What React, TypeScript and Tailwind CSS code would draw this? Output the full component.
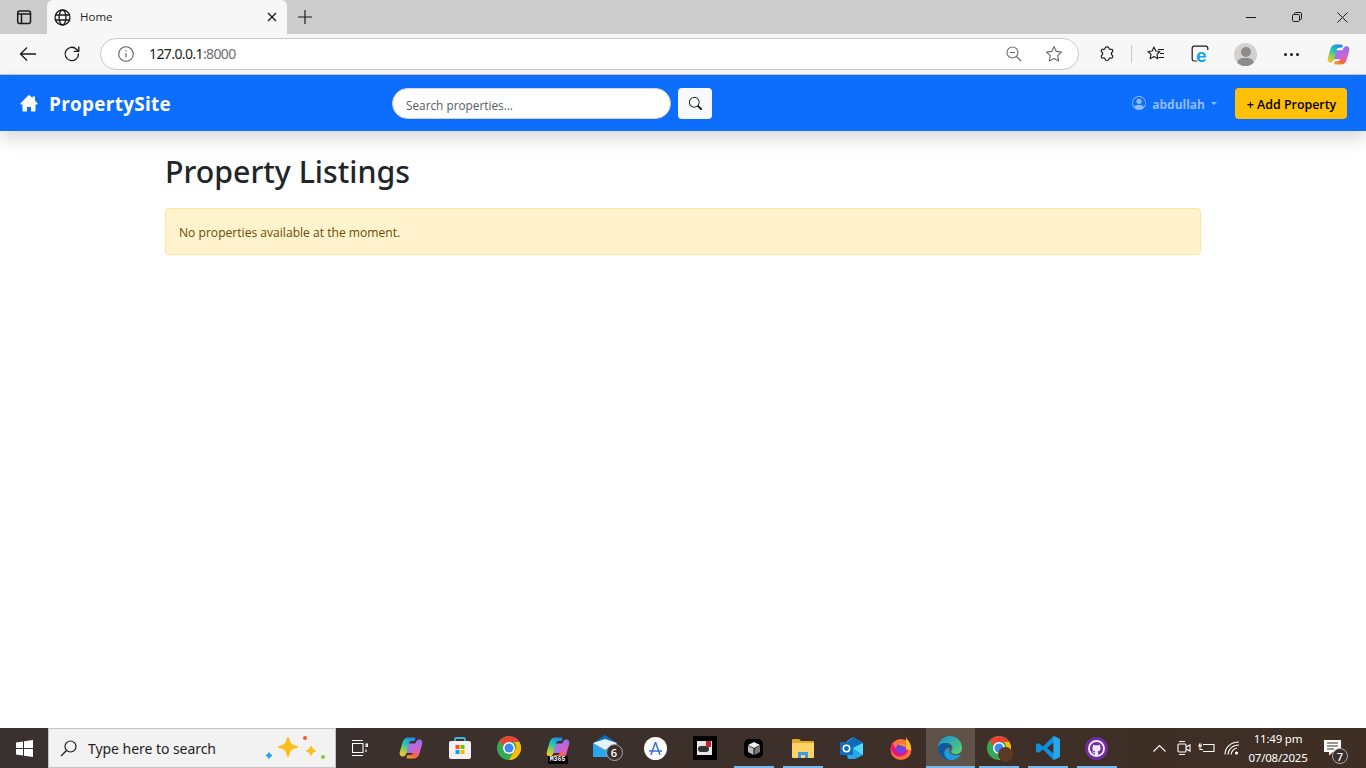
import React from "react";

const FONT = "font-['Open_Sans','Noto_Sans',sans-serif]";

function Stroke({ size = 20, className = "", children, vb = 20 }: { size?: number; className?: string; children: React.ReactNode; vb?: number }) {
  return (
    <svg width={size} height={size} viewBox={`0 0 ${vb} ${vb}`} fill="none" stroke="currentColor" strokeWidth={1.3} strokeLinecap="round" strokeLinejoin="round" className={className}>
      {children}
    </svg>
  );
}

function TabStrip() {
  return (
    <div className="flex h-[34px] bg-[#cccccc] items-stretch">
      <div className="w-[47px] flex items-center justify-center text-[#1b1b1b]">
        <Stroke size={16} vb={16}>
          <rect x="1.7" y="2" width="12.8" height="12.4" rx="2" strokeWidth="1.5" />
          <path d="M1.7 5h12.8M5.5 5v9.4" strokeWidth="1.5" />
        </Stroke>
      </div>
      <div className="w-[240px] bg-[#f7f7f7] rounded-t-[6px] flex items-center pl-[7px] pr-[10px] text-[#1b1b1b]">
        <Stroke size={17} vb={17}>
          <circle cx="8.5" cy="8.5" r="7.5" />
          <ellipse cx="8.5" cy="8.5" rx="3.4" ry="7.5" />
          <path d="M1.5 6h14M1.5 11h14" />
        </Stroke>
        <span className={`${FONT} text-[11.5px] ml-[9px] text-[#1f1f1f]`}>Home</span>
        <svg width="10" height="10" viewBox="0 0 10 10" className="ml-auto" stroke="#1b1b1b" strokeWidth="1.3"><path d="M1 1l8 8M9 1l-8 8" /></svg>
      </div>
      <div className="w-[36px] flex items-center justify-center">
        <svg width="14" height="14" viewBox="0 0 14 14" stroke="#1b1b1b" strokeWidth="1.2"><path d="M7 0v14M0 7h14" /></svg>
      </div>
      <div className="ml-auto flex items-center text-[#1b1b1b]">
        <div className="w-[46px] flex justify-center">
          <svg width="10" height="10" viewBox="0 0 10 10" stroke="currentColor"><path d="M0 5.5h10" /></svg>
        </div>
        <div className="w-[46px] flex justify-center">
          <svg width="10" height="10" viewBox="0 0 10 10" fill="none" stroke="currentColor"><rect x="0.5" y="2.5" width="7" height="7" rx="1.2" /><path d="M2.5 2.2V1.7a1.2 1.2 0 0 1 1.2-1.2h4.6a1.2 1.2 0 0 1 1.2 1.2v4.6a1.2 1.2 0 0 1-1.2 1.2H8" /></svg>
        </div>
        <div className="w-[46px] flex justify-center pr-[2px]">
          <svg width="11" height="11" viewBox="0 0 11 11" stroke="currentColor"><path d="M.5.5l10 10M10.5.5l-10 10" /></svg>
        </div>
      </div>
    </div>
  );
}

function Copilot({ size = 24, id = "a" }: { size?: number; id?: string }) {
  return (
    <svg width={size} height={size} viewBox="0 0 24 24">
      <defs>
        <linearGradient id={`cp1${id}`} x1="0.7" y1="0" x2="0.2" y2="1"><stop offset="0" stopColor="#1f8fe8" /><stop offset="0.4" stopColor="#20c4b8" /><stop offset="0.75" stopColor="#a8d13c" /><stop offset="1" stopColor="#f5c52e" /></linearGradient>
        <linearGradient id={`cp2${id}`} x1="0.7" y1="0" x2="0.3" y2="1"><stop offset="0" stopColor="#9a6ef0" /><stop offset="0.55" stopColor="#e25fc0" /><stop offset="0.8" stopColor="#f4633f" /><stop offset="1" stopColor="#f2912c" /></linearGradient>
      </defs>
      <path d="M9 7.500h9l-3 9.500H6z" fill="#b06ee0" />
      <path d="M9.500 1.500h5.500c1.800 0 1.800 2.500.5 3.300-.6.300-1.600.2-2.500.2-1.800 0-2.800 1-3.300 3L7.900 15.500c-.6 3-1.900 5-4.400 5C1.200 20.500.2 18 .9 15.500L3.600 6.200C4.500 3.200 6.500 1.500 9.500 1.500z" fill={`url(#cp1${id})`} />
      <path d="M14.500 22.500H9c-1.800 0-1.800-2.500-.5-3.300.6-.3 1.600-.2 2.500-.2 1.800 0 2.800-1 3.300-3l1.800-7.500c.6-3 1.900-5 4.400-5 2.300 0 3.300 2.500 2.600 5l-2.700 9.300c-.9 3-2.900 4.700-5.900 4.700z" fill={`url(#cp2${id})`} />
    </svg>
  );
}

function ToolBar() {
  return (
    <div className="h-[41px] bg-[#f7f7f7] border-b border-[#c9c9c9] flex items-center text-[#1b1b1b] relative">
      <div className="w-[100px] flex items-center">
        <div className="w-[56px] flex justify-center">
          <svg width="18" height="16" viewBox="0 0 18 16" fill="none" stroke="#1b1b1b" strokeWidth="1.3"><path d="M17 8H1.500M8 1.500L1.500 8 8 14.500" /></svg>
        </div>
        <div className="w-[32px] flex justify-center">
          <Stroke size={18} vb={18}>
            <path d="M15.500 9a6.700 6.700 0 1 1-2-4.800L15.500 6" />
            <path d="M15.800 1.800v4.500h-4.500" />
          </Stroke>
        </div>
      </div>
      <div className="w-[979px] h-[32px] bg-white border border-[#c9c9c9] rounded-full flex items-center pl-[17px] pr-[15px]">
        <svg width="16" height="16" viewBox="0 0 16 16" fill="none" stroke="#5f5f5f" strokeWidth="1.1"><circle cx="8" cy="8" r="7.300" /><path d="M8 7v4.500M8 4.200v1.300" /></svg>
        <span className="ml-[15px] -mt-[1px] text-[14px] text-[#1b1b1b] font-['Noto_Sans','Open_Sans',sans-serif] tracking-[-0.6px]">127.0.0.1<span className="text-[#6e6e6e]">:8000</span></span>
        <div className="ml-auto flex items-center gap-[23px] text-[#6b6b6b]">
          <svg width="16" height="16" viewBox="0 0 16 16" fill="none" stroke="currentColor" strokeWidth="1.1"><circle cx="6.500" cy="6.500" r="5.500" /><path d="M10.500 10.500L15 15M4 6.500h5" /></svg>
          <svg width="18" height="18" viewBox="0 0 18 18" fill="none" stroke="currentColor" strokeWidth="1.1" strokeLinejoin="round"><path d="M9 1.500l2.300 4.900 5.200.7-3.800 3.600 1 5.300L9 13.400 4.300 16l1-5.300L1.500 7.100l5.200-.7z" /></svg>
        </div>
      </div>
      <div className="flex-1 flex items-center pl-[20px] relative h-full">
        <svg width="16" height="16" viewBox="0 0 16 16" fill="none" stroke="#1b1b1b" strokeWidth="1.200" strokeLinejoin="round"><path d="M6 2.400c0-2 4-2 4 0 .2 1 1 1.100 2 .9 1.700-.3 2.400 1.900 1 3-.9.700-.9 2 0 2.700 1.400 1.100.7 3.400-1 3-1-.2-1.800 0-2 1-.4 2-3.600 2-4 0-.2-1-1-1.200-2-1-1.700.4-2.500-1.900-1-3 .9-.7.900-2 0-2.700-1.500-1.100-.7-3.300 1-3 1 .2 1.800.1 2-.9z" /></svg>
        <div className="w-px h-[18px] bg-[#c9c9c9] ml-[16px]" />
        <div className="ml-[15px]">
          <svg width="18" height="16" viewBox="0 0 18 16" fill="none" stroke="#1b1b1b" strokeWidth="1.100" strokeLinejoin="round"><path d="M7 1l1.800 4 4.200.5-3 2.900.8 4.300L7 10.600 3.200 12.700 4 8.400 1 5.500 5.200 5z" /><path d="M11 3.500h6M13 7.500h4M11.500 11.500h5.500" /></svg>
        </div>
        <div className="ml-[26px] relative w-[18px] h-[18px]">
          <svg width="18" height="18" viewBox="0 0 18 18" fill="none" stroke="#1b1b1b" strokeWidth="1.200"><path d="M6 16H3a1.800 1.800 0 0 1-1.800-1.800V3A1.800 1.800 0 0 1 3 1.200h12A1.800 1.800 0 0 1 16.800 3v2" /></svg>
          <span className="absolute left-[5px] top-[3px] text-[#1aa3e8] font-bold text-[19px] leading-[16px] font-['Liberation_Sans',sans-serif]">e</span>
        </div>
        <div className="ml-[25px] w-[23px] h-[23px] rounded-full bg-[#d3d1cf] overflow-hidden relative flex justify-center">
          <div className="absolute top-[4px] w-[10px] h-[10px] rounded-full bg-[#8e8c8a]" />
          <div className="absolute top-[15px] w-[17px] h-[12px] rounded-full bg-[#8e8c8a]" />
        </div>
        <div className="ml-[27px] flex gap-[3px]">
          <div className="w-[3px] h-[3px] rounded-full bg-[#1b1b1b]" />
          <div className="w-[3px] h-[3px] rounded-full bg-[#1b1b1b]" />
          <div className="w-[3px] h-[3px] rounded-full bg-[#1b1b1b]" />
        </div>
        <div className="ml-[28px]"><Copilot size={23} id="t" /></div>
      </div>
    </div>
  );
}

function Navbar() {
  return (
    <nav className={`h-[56px] bg-[#0d6efd] shadow-[0_8px_16px_rgba(0,0,0,0.15)] flex items-center relative ${FONT}`}>
      <div className="w-[392px] flex items-center pl-[20px] text-white">
        <svg width="18" height="17" viewBox="0 0 18 17" fill="white" className="mt-[2px]"><path d="M9 .3c.3 0 .6.1.8.3l2.700 2.500V1.500h2.500v3.900l2.400 2.800c.5.500.1 1.300-.6 1.300H15.500v6c0 .600-.4 1-1 1H11v-4.500H7V16.500H3.500c-.6 0-1-.4-1-1v-6H1.200c-.7 0-1.100-.8-.6-1.300L8.200.6C8.400.4 8.700.3 9 .3z" /></svg>
        <span className="ml-[11px] mt-[2px] text-[18.900px] font-bold tracking-[0.3px]">PropertySite</span>
      </div>
      <input readOnly placeholder="Search properties..." className="w-[279px] h-[31px] bg-white rounded-full border border-[#ced4da] pl-[13px] pt-[3px] text-[11.800px] placeholder:text-[#595c5f] outline-none" />
      <div className="ml-[7px] w-[34px] h-[31px] rounded-[4px] bg-[#f8f9fa] flex items-center justify-center">
        <svg width="13" height="13" viewBox="0 0 16 16" fill="#000"><path d="M11.742 10.344a6.500 6.500 0 1 0-1.397 1.398h-.001q.044.060.098.115l3.850 3.850a1 1 0 0 0 1.415-1.414l-3.850-3.850a1 1 0 0 0-.115-.100zM12 6.500a5.500 5.500 0 1 1-11 0 5.500 5.500 0 0 1 11 0" /></svg>
      </div>
      <div className="ml-auto flex items-center pr-[19px]">
        <svg width="14" height="14" viewBox="0 0 16 16" fill="#8fbcfe"><path d="M11 6a3 3 0 1 1-6 0 3 3 0 0 1 6 0" /><path fillRule="evenodd" d="M0 8a8 8 0 1 1 16 0A8 8 0 0 1 0 8m8-7a7 7 0 0 0-5.468 11.370C3.242 11.226 4.805 10 8 10s4.757 1.225 5.468 2.370A7 7 0 0 0 8 1" /></svg>
        <span className="ml-[6px] mt-[4px] text-[12px] font-bold text-[#8fbcfe]">abdullah</span>
        <div className="ml-[6px] w-0 h-0 border-x-[3.500px] border-x-transparent border-t-[3.500px] border-t-[#8fbcfe]" />
        <div className="ml-[18px] w-[112px] h-[31px] pt-[4px] pl-[1px] rounded-[4px] bg-[#ffc107] flex items-center justify-center text-[12.400px] font-semibold text-black">+ Add Property</div>
      </div>
    </nav>
  );
}

function Main() {
  return (
    <main className={`flex-1 bg-white ${FONT}`}>
      <div className="w-[1036px] mx-auto pt-[21px]">
        <h1 className="text-[30.300px] leading-[40px] font-medium text-[#212529] font-['Noto_Sans','Open_Sans',sans-serif]">Property Listings</h1>
        <div className="mt-[16px] h-[47px] rounded-[4px] bg-[#fff3cd] border border-[#ffe69c] flex items-center pl-[13px] pt-[3px] text-[12.100px] text-[#664d03]">No properties available at the moment.</div>
      </div>
    </main>
  );
}

function Slot({ children, on, active, w = 49, nudge = true }: { children: React.ReactNode; on?: boolean; active?: boolean; w?: number; nudge?: boolean }) {
  return (
    <div className={`h-full relative flex items-center justify-center shrink-0 ${nudge ? "pr-[2px]" : ""} ${active ? "bg-[#5e5249]" : ""}`} style={{ width: w }}>
      {children}
      {on && <div className={`absolute bottom-0 h-[2px] bg-[#76b9ed] ${active ? "left-0 right-0" : "left-[4px] right-[5px]"}`} />}
    </div>
  );
}

function ChromeIcon({ size = 24 }: { size?: number }) {
  return (
    <svg width={size} height={size} viewBox="0 0 24 24">
      <circle cx="12" cy="12" r="12" fill="#34a853" />
      <path d="M12 0a12 12 0 0 1 10.400 6H12a6 6 0 0 0-5.700 4L2.500 4.700A12 12 0 0 1 12 0z" fill="#ea4335" />
      <path d="M22.400 6A12 12 0 0 1 12 24l5-8.500a6 6 0 0 0 0-9.500z" fill="#fbbc04" />
      <circle cx="12" cy="12" r="6" fill="white" />
      <circle cx="12" cy="12" r="4.500" fill="#4285f4" />
    </svg>
  );
}

function Taskbar() {
  return (
    <div className={`h-[40px] bg-gradient-to-r from-[#393130] to-[#3f2e24] flex items-center text-white ${FONT} relative`}>
      <div className="w-[48px] flex justify-center">
        <svg width="17" height="17" viewBox="0 0 17 17" fill="white"><path d="M0 2.400l7-1v6.600H0zM8 1.300L17 0v8H8zM0 9h7v6.600l-7-1zM8 9h9v8l-9-1.300z" /></svg>
      </div>
      <div className="w-[288px] h-full bg-[#f2f2f2] border border-[#c5c5c5] flex items-center pl-[11px] relative">
        <svg width="17" height="17" viewBox="0 0 17 17" fill="none" stroke="#1b1b1b" strokeWidth="1.200"><circle cx="10.500" cy="6.500" r="5.500" /><path d="M6.500 10.500L1 16" /></svg>
        <span className="ml-[11px] text-[14px] text-[#1f1f1f] font-['Noto_Sans',sans-serif] tracking-[-0.05px]">Type here to search</span>
        <svg width="64" height="30" viewBox="0 0 64 30" className="absolute left-[215px] top-[6px]" strokeLinejoin="round" strokeWidth="2">
          <path d="M24 3c1.200 6 2.800 7.800 9 9-6.200 1.200-7.800 3-9 9-1.200-6-2.800-7.800-9-9 6.200-1.200 7.800-3 9-9z" fill="#fdbf1f" stroke="#fdbf1f" />
          <path d="M47 12c.5 2.500 1.300 3.300 3.700 3.800-2.400.5-3.200 1.300-3.700 3.800-.5-2.500-1.300-3.300-3.700-3.800 2.400-.5 3.200-1.300 3.700-3.800z" fill="#fdbf1f" stroke="#fdbf1f" />
          <path d="M5 18c.3 1.500.8 2 2.500 2.500-1.700.5-2.200 1-2.500 2.500-.3-1.500-.8-2-2.500-2.500 1.700-.5 2.200-1 2.500-2.500z" fill="#1fa6e8" stroke="#1fa6e8" strokeWidth="1.500" />
          <circle cx="41" cy="3" r="2" fill="#ea5a2c" />
          <circle cx="59" cy="22" r="2" fill="#8cc63f" />
        </svg>
      </div>
      <div className="flex items-center h-full flex-1">
        <Slot w={50}>
          <svg width="16" height="16" viewBox="0 0 16 16" fill="none" stroke="white" strokeWidth="1.100"><path d="M0 .5h11M0 15.500h11M.5 3.500h10.500v9H.5zM14 4v2.500h1.500V4zM14 9.500V12" /></svg>
        </Slot>
        <Slot w={50} nudge={false}><Copilot size={24} id="b" /></Slot>
        <Slot>
          <svg width="24" height="24" viewBox="0 0 24 24">
            <path d="M7 6V3.500A1.500 1.500 0 0 1 8.500 2h7A1.500 1.500 0 0 1 17 3.500V6" fill="none" stroke="#38b6e8" strokeWidth="1.800" />
            <rect x="1" y="5" width="22" height="18" rx="2" fill="#f3f1ef" />
            <rect x="7.500" y="9" width="4" height="4" fill="#f0502a" /><rect x="12.500" y="9" width="4" height="4" fill="#7fba00" />
            <rect x="7.500" y="14" width="4" height="4" fill="#00a4ef" /><rect x="12.500" y="14" width="4" height="4" fill="#ffb900" />
          </svg>
        </Slot>
        <Slot><ChromeIcon size={24} /></Slot>
        <Slot>
          <div className="relative w-[24px] h-[24px]">
            <Copilot size={24} id="c" />
            <span className="absolute left-[2px] bottom-[-4px] w-[20px] h-[8px] bg-black text-white text-[6.500px] leading-[8px] text-center font-bold font-['Liberation_Mono',monospace]">M365</span>
          </div>
        </Slot>
        <Slot>
          <div className="relative w-[30px] h-[26px] ml-[2px]">
            <svg width="24" height="22" viewBox="0 0 24 22" className="absolute left-0 top-0">
              <path d="M12 0L0 8h24z" fill="#0f6cbd" />
              <path d="M0 8v14h24V8L12 15z" fill="#28a8ea" />
              <path d="M0 8l12 7 12-7-12-4z" fill="#e8f4fb" />
            </svg>
            <span className="absolute right-0 bottom-0 w-[17px] h-[17px] rounded-full bg-[#3a2f2b] border border-[#aaa] flex items-center justify-center text-[11px] font-semibold leading-none">6</span>
          </div>
        </Slot>
        <Slot>
          <div className="w-[23px] h-[23px] rounded-full bg-white flex items-center justify-center">
            <svg width="15" height="15" viewBox="0 0 15 15" fill="none" stroke="#3f6fdc" strokeWidth="1.500"><path d="M7.500 1L3 14M7.500 1L12 14M1 10h13" /></svg>
          </div>
        </Slot>
        <Slot>
          <div className="w-[24px] h-[24px] bg-black flex items-center justify-center">
            <div className="w-[15px] h-[14px] bg-[#e8e8e8] relative">
              <div className="absolute left-[1px] top-[5px] w-[11px] h-[6px] rounded-full bg-[#333]" />
              <div className="absolute right-[1px] top-0 w-[5px] h-[6px] bg-[#c8232c]" />
            </div>
          </div>
        </Slot>
        <Slot on>
          <div className="w-[19px] h-[19px] rounded-[5px] bg-black flex items-center justify-center">
            <svg width="12" height="13" viewBox="0 0 12 13"><path d="M6 0l6 3-6 3-6-3z" fill="#eee" /><path d="M0 3.500l5.500 3V13L0 10z" fill="#bbb" /><path d="M12 3.500l-5.500 3V13L12 10z" fill="#777" /></svg>
          </div>
        </Slot>
        <Slot on>
          <svg width="22" height="20" viewBox="0 0 22 20">
            <path d="M0 2a1 1 0 0 1 1-1h6l2 2h12a1 1 0 0 1 1 1v15H0z" fill="#e8a92b" />
            <path d="M0 5h22v14a1 1 0 0 1-1 1H1a1 1 0 0 1-1-1z" fill="#fcd366" />
            <path d="M6 20v-6h10v6h-3v-3H9v3z" fill="#3d9ae0" />
          </svg>
        </Slot>
        <Slot>
          <svg width="24" height="24" viewBox="0 0 24 24">
            <path d="M13 1l10 6v12l-8 4H8l-1-4V5z" fill="#28a8ea" />
            <path d="M13 1l10 6-10 5-6-5z" fill="#0f6cbd" />
            <path d="M23 7v12l-10-7z" fill="#50d9ff" />
            <rect x="0" y="6" width="13" height="13" rx="1" fill="#0f6cbd" />
            <circle cx="6.500" cy="12.500" r="3.200" fill="none" stroke="white" strokeWidth="1.600" />
          </svg>
        </Slot>
        <Slot>
          <svg width="24" height="24" viewBox="0 0 24 24">
            <circle cx="12" cy="13.500" r="10.500" fill="#ff7139" />
            <path d="M17 1c1 3 5 5 5 11 0 4-3 2-5 0z" fill="#ffbd2e" />
            <path d="M3 6c3 8 8 10 16 8-1 5-8 9-13 5S1 10 3 6z" fill="#e31587" />
            <circle cx="12" cy="12.500" r="5" fill="#7542e5" />
            <path d="M9 8c3-2 8 0 9 4-3-2-6-2-9-4z" fill="#ff980e" />
          </svg>
        </Slot>
        <Slot on active>
          <svg width="24" height="24" viewBox="0 0 24 24">
            <defs><linearGradient id="edg" x1="0" y1="0" x2="1" y2="1"><stop offset="0" stopColor="#0f8fd8" /><stop offset="1" stopColor="#5fd66a" /></linearGradient></defs>
            <path d="M12 0a12 12 0 0 1 12 12c0 4-3 6-6.500 6-3 0-4.500-1.200-4.500-2.500 0-1 1.500-1 1.500-3.500 0-3-3-5-6-5C4 7 1 9 0 12 0 5 5 0 12 0z" fill="url(#edg)" />
            <path d="M0 12c0-3 3.500-5 7-5 3 0 6 2 6 5-2-1.500-6-1-7 2.500C5 18 8 23 13 24 6 24.500 0 19 0 12z" fill="#0c59a4" />
            <path d="M13 24c4 0 8-2 10-6-2 1.500-7 2-10 0-2-1.500-2.500-4-1-6-4 0-6 3-5.500 6 .5 3 3 6 6.500 6z" fill="#1b9de2" />
          </svg>
        </Slot>
        <Slot on>
          <div className="relative w-[24px] h-[24px]">
            <ChromeIcon size={24} />
            <div className="absolute left-[11px] top-[11px] w-[15px] h-[15px] rounded-full bg-[#5b3a26]" />
          </div>
        </Slot>
        <Slot on>
          <svg width="24" height="24" viewBox="0 0 24 24">
            <path d="M17.500 0L24 3v18l-6.500 3L7 13.500 2.500 17 0 15.500v-7L2.500 7 7 10.500zM17.500 6.500L11 12l6.500 5.500z" fill="#0f8fe0" fillRule="evenodd" />
            <path d="M17.500 0L24 3v18l-6.500 3z" fill="#28a8ea" />
          </svg>
        </Slot>
        <Slot on>
          <div className="w-[23px] h-[23px] rounded-full bg-[#6e2c9c] flex items-center justify-center">
            <div className="w-[17px] h-[17px] rounded-full bg-[#f1e9f6] flex items-center justify-center">
              <svg width="13" height="13" viewBox="0 0 16 16" fill="#6e2c9c"><path d="M8 0C3.580 0 0 3.580 0 8c0 3.540 2.290 6.530 5.470 7.590.4.070.55-.17.55-.38 0-.19-.01-.82-.01-1.490-2.010.370-2.530-.49-2.690-.94-.09-.23-.48-.94-.82-1.130-.28-.150-.68-.520-.01-.530.630-.010 1.080.580 1.230.820.720 1.210 1.870.870 2.330.660.070-.520.280-.870.510-1.070-1.780-.2-3.640-.890-3.640-3.950 0-.870.310-1.590.820-2.150-.080-.2-.36-1.020.080-2.120 0 0 .670-.210 2.200.820.640-.180 1.320-.270 2-.270s1.360.090 2 .270c1.530-1.040 2.200-.820 2.200-.820.440 1.100.160 1.920.080 2.120.510.560.820 1.270.820 2.150 0 3.070-1.870 3.750-3.650 3.950.290.250.540.730.540 1.480 0 1.070-.010 1.930-.010 2.200 0 .210.150.460.550.380A8.010 8.010 0 0 0 16 8c0-4.420-3.580-8-8-8" /></svg>
            </div>
          </div>
        </Slot>
        <div className="ml-auto flex items-center h-full">
          <svg width="13" height="8" viewBox="0 0 13 8" fill="none" stroke="white" strokeWidth="1.100"><path d="M.5 7.500l6-6 6 6" /></svg>
          <svg width="14" height="18" viewBox="0 0 14 18" fill="none" stroke="white" strokeWidth="1.100" className="ml-[11px]"><rect x="1" y="5" width="8" height="8" rx="1" /><path d="M9 8l4-2v6l-4-2M2 2.500h6M2 15.500h6" /></svg>
          <svg width="17" height="12" viewBox="0 0 17 12" fill="none" stroke="white" strokeWidth="1.100" className="ml-[7px]"><path d="M5 2.500h11v7H5M0 4h4M1.500 1.500V4M3 1.500V4M2 4v3.500h3" /></svg>
          <svg width="16" height="14" viewBox="0 0 16 14" fill="none" stroke="white" strokeWidth="1.100" className="ml-[9px]"><path d="M1 13.500C1 7 6 1 15 1M4 13.500C4 9 8 4 15 4M7 13.500C7 11 10 7 13 7" /><circle cx="12.500" cy="12" r="1" fill="white" /></svg>
          <div className="w-[60px] ml-[8px] text-center font-['Noto_Sans',sans-serif] text-[11.500px] leading-[19px] tracking-[-0.2px] text-white whitespace-nowrap">
            <div>11:49 pm</div>
            <div>07/08/2025</div>
          </div>
          <div className="w-[58px] relative h-full">
            <svg width="18" height="16" viewBox="0 0 18 16" className="absolute left-[16px] top-[12px]"><path d="M0 0h17v12H9l-4 3.500V12H0z" fill="white" /><path d="M3 3h11M3 6h11M3 9h7" stroke="#3a2f2b" /></svg>
            <span className="absolute left-[24px] top-[20px] w-[16px] h-[16px] rounded-full bg-[#3a2f2b] border border-[#aaa] flex items-center justify-center text-[11px] font-semibold leading-none">7</span>
          </div>
        </div>
      </div>
    </div>
  );
}

export default function App() {
  return (
    <div className="w-[1366px] h-[768px] flex flex-col overflow-hidden bg-white">
      <TabStrip />
      <ToolBar />
      <Navbar />
      <Main />
      <Taskbar />
    </div>
  );
}
